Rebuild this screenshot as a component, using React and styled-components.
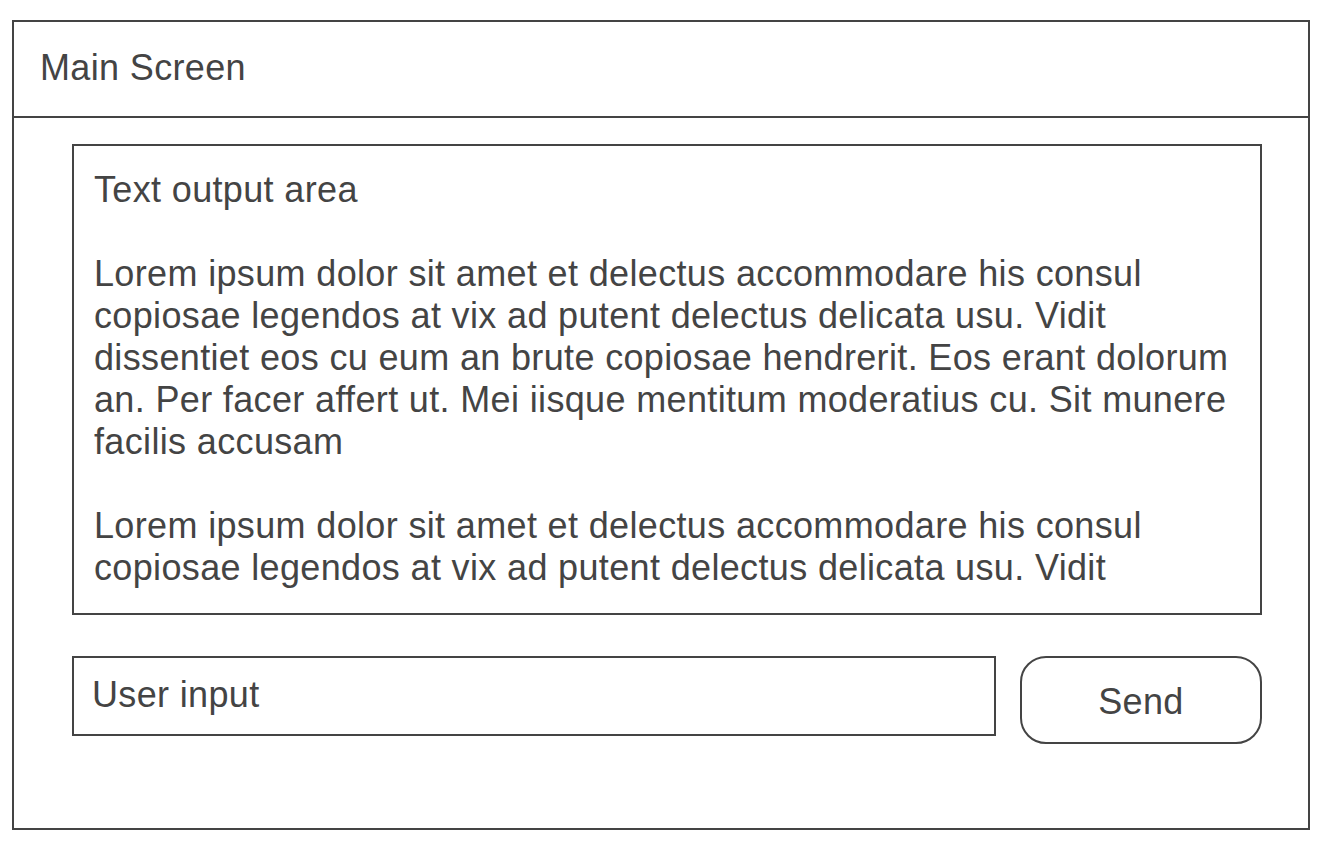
import React from "react";
import styled, { createGlobalStyle } from "styled-components";

const GlobalStyle = createGlobalStyle`
  body {
    margin: 0;
    background: #ffffff;
    font-family: "Liberation Sans", Arial, sans-serif;
    color: #444444;
    letter-spacing: 0.35px;
  }
`;

const Page = styled.div`
  padding: 20px 12px;
`;

const Frame = styled.div`
  width: 1298px;
  height: 810px;
  box-sizing: border-box;
  border: 2px solid #444;
  display: flex;
  flex-direction: column;
`;

const Header = styled.header`
  height: 96px;
  box-sizing: border-box;
  border-bottom: 2px solid #444;
  display: flex;
  align-items: center;
  padding: 0 0 2px 26px;
  font-size: 36px;
`;

const Body = styled.main`
  padding: 26px 46px 0 58px;
  display: flex;
  flex-direction: column;
  gap: 41px;
`;

const Output = styled.section`
  height: 471px;
  box-sizing: border-box;
  border: 2px solid #444;
  padding: 23px 18px 0 20px;
`;

const OutputText = styled.div`
  font-size: 36px;
  line-height: 42px;

  p {
    margin: 0 0 42px;
  }

  p:last-child {
    margin-bottom: 0;
  }
`;

const InputRow = styled.div`
  display: flex;
  align-items: flex-start;
  gap: 24px;
`;

const UserInput = styled.input`
  width: 924px;
  height: 80px;
  box-sizing: border-box;
  border: 2px solid #444;
  border-radius: 0;
  padding: 0 18px 2px;
  font-family: "Liberation Sans", Arial, sans-serif;
  font-size: 36px;
  letter-spacing: 0.35px;
  color: #444;
  outline: none;

  &::placeholder {
    color: #444;
    opacity: 1;
  }
`;

const SendButton = styled.button`
  width: 242px;
  height: 88px;
  box-sizing: border-box;
  border: 2px solid #444;
  border-radius: 26px;
  background: #fff;
  font-family: "Liberation Sans", Arial, sans-serif;
  font-size: 36px;
  letter-spacing: 0.35px;
  color: #444;
  padding: 4px 0 0;
`;

const lorem =
  "Lorem ipsum dolor sit amet et delectus accommodare his consul copiosae legendos at vix ad putent delectus delicata usu. Vidit dissentiet eos cu eum an brute copiosae hendrerit. Eos erant dolorum an. Per facer affert ut. Mei iisque mentitum moderatius cu. Sit munere facilis accusam";

const loremStart =
  "Lorem ipsum dolor sit amet et delectus accommodare his consul copiosae legendos at vix ad putent delectus delicata usu. Vidit";

function App() {
  return (
    <>
      <GlobalStyle />
      <Page>
        <Frame>
          <Header>Main Screen</Header>
          <Body>
            <Output>
              <OutputText>
                <p>Text output area</p>
                <p>{lorem}</p>
                <p>{loremStart}</p>
              </OutputText>
            </Output>
            <InputRow>
              <UserInput placeholder="User input" />
              <SendButton>Send</SendButton>
            </InputRow>
          </Body>
        </Frame>
      </Page>
    </>
  );
}

export default App;
